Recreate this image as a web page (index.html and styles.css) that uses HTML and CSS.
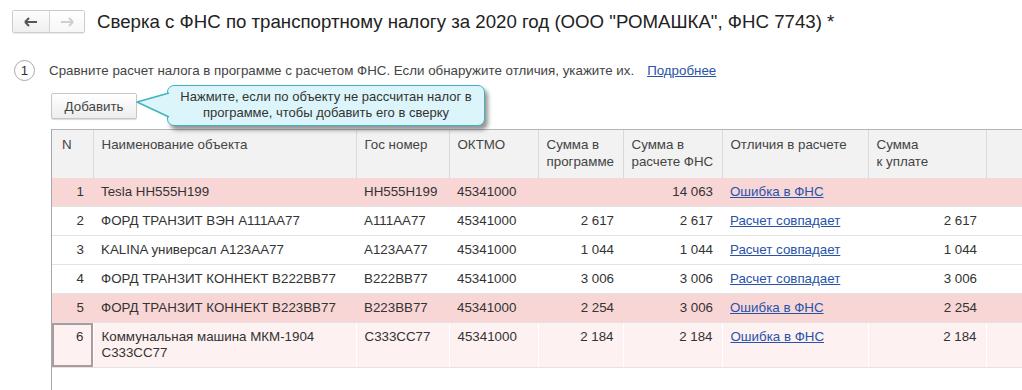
FILE: index.html
```html
<!DOCTYPE html>
<html lang="ru">
<head>
<meta charset="utf-8">
<link rel="stylesheet" href="styles.css">
</head>
<body>
<div class="page">
  <header class="top">
    <div class="nav">
      <button class="nav-btn" aria-label="Назад">
        <svg width="14" height="10" viewBox="0 0 14 10"><path d="M1 5h12M1 5l4-4M1 5l4 4" fill="none" stroke="#555" stroke-width="2"/></svg>
      </button>
      <button class="nav-btn nav-btn--off" aria-label="Вперёд">
        <svg width="14" height="10" viewBox="0 0 14 10"><path d="M1 5h12M13 5l-4-4M13 5l-4 4" fill="none" stroke="#cfcfcf" stroke-width="2"/></svg>
      </button>
    </div>
    <h1 class="title">Сверка с ФНС по транспортному налогу за 2020 год (ООО "РОМАШКА", ФНС 7743) *</h1>
  </header>

  <div class="step">
    <span class="step-num">1</span>
    <span class="step-text">Сравните расчет налога в программе с расчетом ФНС. Если обнаружите отличия, укажите их.</span>
    <a class="more" href="#">Подробнее</a>
  </div>

  <div class="toolbar">
    <button class="btn">Добавить</button>
    <div class="tooltip">
      <svg class="tooltip-arrow" width="34" height="30" viewBox="0 0 34 30"><path d="M33 3 L1 12 L33 27" fill="#dcf5fa" stroke="#3fb3bf" stroke-width="1.5" stroke-linejoin="round"/></svg>
      <p class="tooltip-text">Нажмите, если по объекту не рассчитан налог в программе, чтобы добавить его в сверку</p>
    </div>
  </div>

  <div class="grid">
    <table class="tbl">
      <colgroup>
        <col class="c-n"><col class="c-name"><col class="c-gos"><col class="c-okt"><col class="c-prog"><col class="c-fns"><col class="c-diff"><col class="c-pay"><col class="c-last">
      </colgroup>
      <thead>
        <tr>
          <th>N</th>
          <th>Наименование объекта</th>
          <th>Гос номер</th>
          <th>ОКТМО</th>
          <th>Сумма в<br>программе</th>
          <th>Сумма в<br>расчете ФНС</th>
          <th>Отличия в расчете</th>
          <th>Сумма<br>к уплате</th>
          <th></th>
        </tr>
      </thead>
      <tbody>
        <tr class="err">
          <td class="num">1</td><td>Tesla HH555H199</td><td>HH555H199</td><td>45341000</td><td class="num"></td><td class="num">14 063</td><td><a href="#">Ошибка в ФНС</a></td><td class="num"></td><td></td>
        </tr>
        <tr>
          <td class="num">2</td><td>ФОРД ТРАНЗИТ ВЭН А111АА77</td><td>А111АА77</td><td>45341000</td><td class="num">2 617</td><td class="num">2 617</td><td><a href="#">Расчет совпадает</a></td><td class="num">2 617</td><td></td>
        </tr>
        <tr>
          <td class="num">3</td><td>KALINA универсал А123АА77</td><td>А123АА77</td><td>45341000</td><td class="num">1 044</td><td class="num">1 044</td><td><a href="#">Расчет совпадает</a></td><td class="num">1 044</td><td></td>
        </tr>
        <tr>
          <td class="num">4</td><td>ФОРД ТРАНЗИТ КОННЕКТ В222ВВ77</td><td>В222ВВ77</td><td>45341000</td><td class="num">3 006</td><td class="num">3 006</td><td><a href="#">Расчет совпадает</a></td><td class="num">3 006</td><td></td>
        </tr>
        <tr class="err">
          <td class="num">5</td><td>ФОРД ТРАНЗИТ КОННЕКТ В223ВВ77</td><td>В223ВВ77</td><td>45341000</td><td class="num">2 254</td><td class="num">3 006</td><td><a href="#">Ошибка в ФНС</a></td><td class="num">2 254</td><td></td>
        </tr>
        <tr class="cur">
          <td class="num focus">6</td><td>Коммунальная машина МКМ-1904<br>С333СС77</td><td>С333СС77</td><td>45341000</td><td class="num">2 184</td><td class="num">2 184</td><td><a href="#">Ошибка в ФНС</a></td><td class="num">2 184</td><td></td>
        </tr>
      </tbody>
    </table>
  </div>
</div>
</body>
</html>
```

FILE: styles.css
```css
* { box-sizing: border-box; }
html, body { margin: 0; padding: 0; background: #fff; }
body {
  font-family: "Liberation Sans", Arial, sans-serif;
  font-size: 13.33px;
  color: #333;
  width: 1022px;
  height: 390px;
  overflow: hidden;
}
.page { display: flex; flex-direction: column; }

.top {
  display: flex;
  align-items: center;
  padding: 10px 0 0 12px;
  gap: 12px;
}
.nav {
  display: flex;
  height: 23px;
  border: 1px solid #cdcdcd;
  border-radius: 2px;
  box-shadow: 0 1px 1px rgba(0,0,0,0.08);
}
.nav-btn {
  width: 36px;
  height: 21px;
  padding: 0;
  border: 0;
  background: linear-gradient(#fdfdfd, #efefef);
  display: flex;
  align-items: center;
  justify-content: center;
}
.nav-btn + .nav-btn { border-left: 1px solid #d5d5d5; width: 35px; background: linear-gradient(#fff, #f7f7f7); }
.title {
  margin: 0;
  font-size: 18.67px;
  font-weight: normal;
  line-height: 23px;
  color: #222;
}

.step {
  display: flex;
  align-items: center;
  margin-top: 27px;
  padding-left: 14px;
  height: 21px;
}
.step-num {
  width: 21px;
  height: 21px;
  border: 1px solid #a8a8a8;
  border-radius: 50%;
  display: flex;
  align-items: center;
  justify-content: center;
  font-size: 13.33px;
  color: #333;
}
.step-text { margin-left: 14px; color: #444; }
.more { margin-left: 13px; color: #2853a8; }

.toolbar {
  position: relative;
  margin-top: 12px;
  padding-left: 51px;
  height: 26px;
}
.btn {
  height: 26px;
  width: 86px;
  padding: 0;
  font-family: inherit;
  font-size: 13.33px;
  color: #444;
  border: 1px solid #c6c6c6;
  border-radius: 2px;
  background: linear-gradient(#ffffff, #ededed);
  box-shadow: 0 1px 1px rgba(0,0,0,0.15);
}
.tooltip {
  position: absolute;
  left: 167px;
  top: -8px;
  width: 318px;
  height: 41px;
  background: #dcf5fa;
  border: 1.5px solid #3fb3bf;
  border-radius: 7px;
  box-shadow: 3px 4px 4px rgba(60,60,60,0.55);
  z-index: 2;
  font-size: 13px;
}
.tooltip-arrow {
  position: absolute;
  left: -32px;
  top: 4px;
}
.tooltip-text {
  margin: 0;
  padding: 3px 8px 0;
  text-align: center;
  line-height: 16px;
  color: #333;
}

.grid {
  margin-top: 10px;
  margin-left: 51px;
  height: 262px;
  border-left: 1px solid #a8a8a8;
  border-top: 1px solid #b4b4b4;
  overflow: hidden;
}
.tbl {
  border-collapse: collapse;
  table-layout: fixed;
  width: 1000px;
}
.c-n { width: 41px; }
.c-name { width: 263px; }
.c-gos { width: 93px; }
.c-okt { width: 89px; }
.c-prog { width: 85px; }
.c-fns { width: 99px; }
.c-diff { width: 146px; }
.c-pay { width: 118px; }
.c-last { width: 66px; }

.tbl th {
  height: 48px;
  background: #f2f2f2;
  font-weight: normal;
  text-align: left;
  vertical-align: top;
  padding: 6px 8px 0;
  line-height: 17px;
  color: #444;
  border-left: 1px solid #dadada;
}
.tbl th:first-child { border-left: 0; padding-left: 10px; }
.tbl td {
  padding: 6px 9px 6px 8px;
  line-height: 16px;
  vertical-align: top;
  white-space: nowrap;
  color: #333;
  border-bottom: 1px solid #e3e3e3;
}
.tbl td.num { text-align: right; }
.tbl a { color: #2853a8; }
.tbl tr.err td { background: #f9d6d6; }
.tbl tr.cur td { background: #fdf1f1; border-left: 1px solid #fff; border-bottom-color: #e3e3e3; }
.tbl tr.cur td:first-child { border-left: 0; }
.tbl tr.cur td.focus { box-shadow: inset 0 0 0 2px #a99c9c; }
```
